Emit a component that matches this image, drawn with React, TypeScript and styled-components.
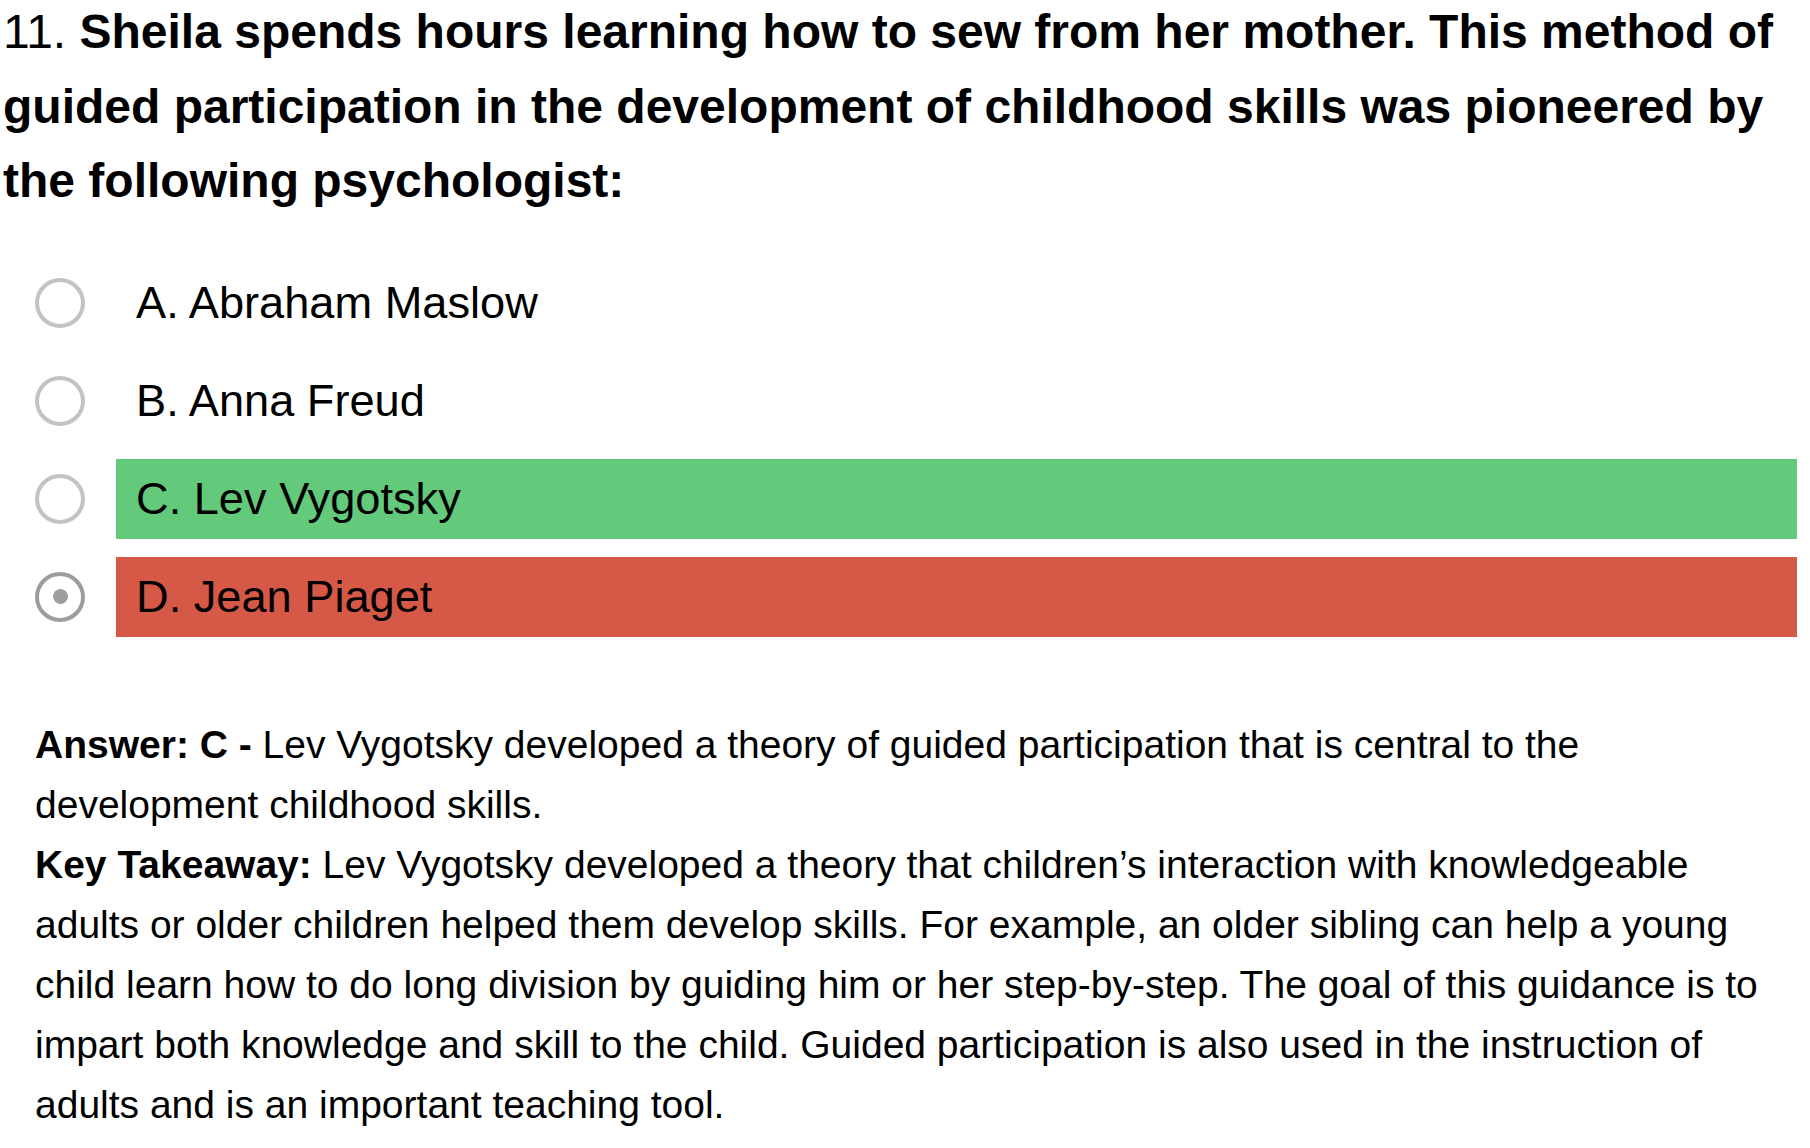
import React from "react";
import styled, { createGlobalStyle } from "styled-components";

const GlobalStyle = createGlobalStyle`
  html, body {
    margin: 0;
    padding: 0;
    background: #ffffff;
  }
  body {
    font-family: "Liberation Sans", Arial, Helvetica, sans-serif;
    color: #000000;
  }
`;

const Page = styled.div`
  width: 1810px;
  box-sizing: border-box;
  padding: 0 13px 0 0;
  display: flex;
  flex-direction: column;
`;

const Question = styled.p`
  margin: -5px 0 0 0;
  padding-left: 3px;
  font-size: 48px;
  line-height: 74.5px;
  font-weight: 700;
`;

const Number = styled.span`
  font-weight: 400;
`;

const OptionList = styled.div`
  margin-top: 44px;
  display: flex;
  flex-direction: column;
  gap: 18px;
`;

const OptionRow = styled.label`
  display: flex;
  align-items: stretch;
  height: 80px;
`;

const RadioCell = styled.div`
  width: 116px;
  flex: 0 0 116px;
  box-sizing: border-box;
  padding-left: 35px;
  display: flex;
  align-items: center;
`;

const Radio = styled.span<{ $checked?: boolean }>`
  width: 50px;
  height: 50px;
  box-sizing: border-box;
  border-radius: 50%;
  border: 4px solid ${(p) => (p.$checked ? "#9d9d9d" : "#c3c3c3")};
  display: flex;
  align-items: center;
  justify-content: center;
  background: #ffffff;

  &::after {
    content: "";
    display: ${(p) => (p.$checked ? "block" : "none")};
    width: 15px;
    height: 15px;
    border-radius: 50%;
    background: #9d9d9d;
  }
`;

type Status = "none" | "correct" | "wrong";

const barColors: Record<Status, string> = {
  none: "transparent",
  correct: "#63c97b",
  wrong: "#d65846",
};

const OptionBar = styled.div<{ $status: Status }>`
  flex: 1;
  display: flex;
  align-items: center;
  padding-left: 20px;
  background: ${(p) => barColors[p.$status]};
  font-size: 45.2px;
  font-weight: 400;
`;

const Explanation = styled.div`
  margin-top: 78px;
  padding-left: 35px;
  font-size: 39px;
  line-height: 60px;
`;

const ExplanationLine = styled.p`
  margin: 0;
`;

const options: { label: string; status: Status; checked: boolean }[] = [
  { label: "A. Abraham Maslow", status: "none", checked: false },
  { label: "B. Anna Freud", status: "none", checked: false },
  { label: "C. Lev Vygotsky", status: "correct", checked: false },
  { label: "D. Jean Piaget", status: "wrong", checked: true },
];

export default function App() {
  return (
    <>
      <GlobalStyle />
      <Page>
        <Question>
          <Number>11. </Number>
          Sheila spends hours learning how to sew from her mother. This method
          of guided participation in the development of childhood skills was
          pioneered by the following psychologist:
        </Question>
        <OptionList>
          {options.map((o) => (
            <OptionRow key={o.label}>
              <RadioCell>
                <Radio $checked={o.checked} />
              </RadioCell>
              <OptionBar $status={o.status}>{o.label}</OptionBar>
            </OptionRow>
          ))}
        </OptionList>
        <Explanation>
          <ExplanationLine>
            <b>Answer: C - </b>Lev Vygotsky developed a theory of guided
            participation that is central to the development childhood skills.
          </ExplanationLine>
          <ExplanationLine>
            <b>Key Takeaway:</b> Lev Vygotsky developed a theory that
            children’s interaction with knowledgeable adults or older children
            helped them develop skills. For example, an older sibling can help a
            young child learn how to do long division by guiding him or her
            step-by-step. The goal of this guidance is to impart both knowledge
            and skill to the child. Guided participation is also used in the
            instruction of adults and is an important teaching tool.
          </ExplanationLine>
        </Explanation>
      </Page>
    </>
  );
}
